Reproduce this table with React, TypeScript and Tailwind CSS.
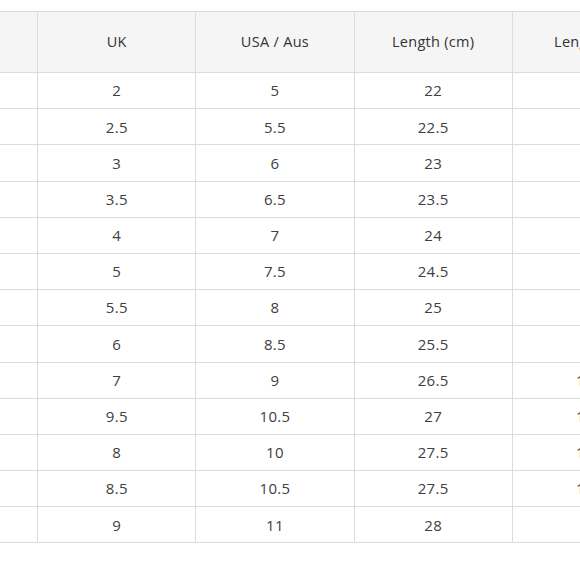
import React from "react";

const rows: [string, string, string, string, string][] = [
  ["35", "2", "5", "22", "8.7"],
  ["35.5", "2.5", "5.5", "22.5", "8.9"],
  ["36", "3", "6", "23", "9"],
  ["36.5", "3.5", "6.5", "23.5", "9.3"],
  ["37", "4", "7", "24", "9.4"],
  ["38", "5", "7.5", "24.5", "9.6"],
  ["38.5", "5.5", "8", "25", "9.8"],
  ["39", "6", "8.5", "25.5", "10"],
  ["40", "7", "9", "26.5", "10.4"],
  ["41", "9.5", "10.5", "27", "10.6"],
  ["42", "8", "10", "27.5", "10.8"],
  ["43", "8.5", "10.5", "27.5", "10.8"],
  ["44", "9", "11", "28", "11"],
];

const headers = ["EU", "UK", "USA / Aus", "Length (cm)", "Length (in)"];

export default function App() {
  return (
    <div
      className="w-[580px] h-[580px] overflow-hidden bg-white pt-[11px]"
      style={{ fontFamily: '"Open Sans", "Liberation Sans", sans-serif' }}
    >
      <table className="ml-[-121px] border-collapse table-fixed w-[792px] text-[15px] text-[#404040]">
        <thead>
          <tr className="bg-[#f5f5f5] h-[61px]">
            {headers.map((h) => (
              <th
                key={h}
                className="w-[158px] border border-[#dcdcdc] font-normal text-[14.5px] tracking-[0.3px] text-[#333] text-center p-0"
              >
                {h}
              </th>
            ))}
          </tr>
        </thead>
        <tbody>
          {rows.map((r, i) => (
            <tr key={i} className="h-[36.2px]">
              {r.map((c, j) => (
                <td
                  key={j}
                  className="border border-[#dcdcdc] text-center p-0 tracking-[0.3px]"
                >
                  {c}
                </td>
              ))}
            </tr>
          ))}
        </tbody>
      </table>
    </div>
  );
}
